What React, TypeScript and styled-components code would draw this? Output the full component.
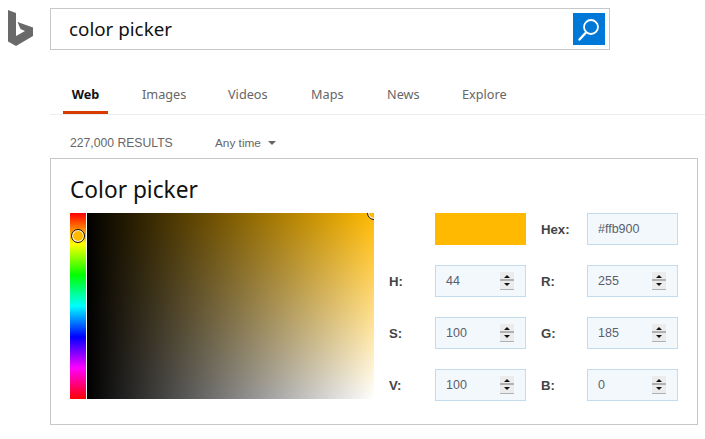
import React from "react";
import styled, { createGlobalStyle } from "styled-components";

const Global = createGlobalStyle`
  html, body { margin: 0; padding: 0; background: #fff; }
  body { font-family: "Open Sans", "Liberation Sans", sans-serif; overflow: hidden; }
`;

const Page = styled.div`
  width: 705px;
  height: 439px;
  display: flex;
  flex-direction: column;
`;

const Header = styled.header`
  display: flex;
  align-items: flex-start;
  padding: 8px 0 0 8px;
  height: 42px;
`;

const LogoMark = styled.svg`
  width: 25px;
  height: 36px;
  margin: 2px 17px 0 0;
  flex: none;
`;

const SearchBox = styled.div`
  box-sizing: border-box;
  width: 560px;
  height: 42px;
  border: 1px solid #c8c8c8;
  display: flex;
  align-items: center;
  justify-content: space-between;
  padding: 0 4px 0 18px;
`;

const Query = styled.span`
  font-family: "Noto Sans", "Open Sans", sans-serif;
  font-size: 18.8px;
  line-height: 26px;
  margin-top: -1px;
  color: #111;
`;

const SearchButton = styled.div`
  width: 32px;
  height: 32px;
  background: #0078d7;
  display: flex;
  align-items: center;
  justify-content: center;
`;

const Tabs = styled.nav`
  margin: 23px 0 0 50px;
  width: 642px;
  height: 41px;
  box-sizing: content-box;
  padding-left: 13px;
  border-bottom: 1px solid #ececec;
  display: grid;
  grid-template-columns: 79px 86px 83px 76px 75px auto;
`;

const Tab = styled.div<{ $active?: boolean }>`
  box-sizing: border-box;
  width: ${(p) => (p.$active ? "45px" : "auto")};
  height: 41px;
  padding-top: 12px;
  text-align: ${(p) => (p.$active ? "center" : "left")};
  font-family: "Noto Sans", "Open Sans", sans-serif;
  font-size: 12.7px;
  line-height: 18px;
  font-weight: ${(p) => (p.$active ? 700 : 400)};
  color: ${(p) => (p.$active ? "#111" : "#666")};
  border-bottom: ${(p) => (p.$active ? "3px solid #d83b01" : "none")};
`;

const Meta = styled.div`
  margin: 20px 0 0 70px;
  height: 16px;
  display: flex;
  align-items: center;
  font-family: "Liberation Sans", Arial, sans-serif;
  font-size: 12.2px;
  color: #666;
`;

const Count = styled.span`
  width: 145px;
`;

const Filter = styled.span`
  display: flex;
  align-items: center;
  gap: 7px;
  font-size: 11.8px;
`;

const Caret = styled.span`
  width: 0;
  height: 0;
  border-left: 4px solid transparent;
  border-right: 4px solid transparent;
  border-top: 4px solid #666;
`;

const Card = styled.section`
  box-sizing: border-box;
  margin: 7px 0 0 50px;
  width: 648px;
  height: 267px;
  border: 1px solid #c8c8c8;
  padding: 15px 19px 0;
`;

const Title = styled.h2`
  margin: 0;
  height: 39px;
  font-family: "Noto Sans", "Open Sans", sans-serif;
  font-weight: 400;
  font-size: 22.7px;
  line-height: 32px;
  color: #111;
`;

const PickerRow = styled.div`
  display: flex;
`;

const HueBar = styled.div`
  position: relative;
  width: 16px;
  height: 186px;
  margin-right: 1px;
  background: linear-gradient(to bottom, #f00 0%, #ff0 16.67%, #0f0 33.33%, #0ff 50%, #00f 66.67%, #f0f 83.33%, #f00 100%);
`;

const SvArea = styled.div`
  position: relative;
  width: 287px;
  height: 186px;
  overflow: hidden;
  background-image: linear-gradient(to right, #000, rgba(0, 0, 0, 0)), linear-gradient(to top, #fff, #ffb900);
`;

const Thumb = styled.span<{ $hue?: boolean }>`
  position: absolute;
  box-sizing: border-box;
  width: 14px;
  height: 14px;
  border-radius: 50%;
  border: 1px solid #111;
  box-shadow: inset 0 0 0 1px #fff;
  background: #ffb900;
  ${(p) => (p.$hue ? "left: 1px; top: 16px;" : "right: -7px; top: -7px;")}
`;

const Fields = styled.div`
  margin-left: 15px;
  display: grid;
  grid-template-columns: 46px 91px 61px 91px;
  grid-auto-rows: 32px;
  row-gap: 20px;
  align-items: center;
`;

const Label = styled.span<{ $second?: boolean }>`
  font-family: "Liberation Sans", Arial, sans-serif;
  font-size: 13.2px;
  font-weight: 700;
  color: #444;
  padding-left: ${(p) => (p.$second ? "15px" : "0")};
`;

const Swatch = styled.div`
  grid-column: 2;
  height: 32px;
  background: #ffb900;
`;

const Input = styled.div`
  box-sizing: border-box;
  height: 32px;
  background: #f3f8fc;
  border: 1px solid #c3dcec;
  display: flex;
  align-items: center;
  justify-content: space-between;
  padding: 0 11px 0 10px;
  font-family: "Liberation Sans", Arial, sans-serif;
  font-size: 12.5px;
  color: #5a5f6e;
`;

const Stepper = styled.div`
  width: 14px;
  height: 17px;
  display: flex;
  flex-direction: column;
  justify-content: space-between;
  background: #ececec;
  border-bottom: 1px solid #b0b0b0;
  position: relative;
  &::before {
    content: "";
    position: absolute;
    left: 0;
    right: 0;
    top: 7px;
    height: 2px;
    background: #b0b0b0;
  }
`;

const Arrow = styled.span<{ $down?: boolean }>`
  display: block;
  width: 0;
  height: 0;
  margin: ${(p) => (p.$down ? "0 auto 3px" : "3px auto 0")};
  border-left: 3px solid transparent;
  border-right: 3px solid transparent;
  ${(p) => (p.$down ? "border-top: 3px solid #111;" : "border-bottom: 3px solid #111;")}
`;

const Spin = () => (
  <Stepper>
    <Arrow />
    <Arrow $down />
  </Stepper>
);

const NumberField = ({ value }: { value: string }) => (
  <Input>
    <span>{value}</span>
    <Spin />
  </Input>
);

const rows = [
  ["H:", "44", "R:", "255"],
  ["S:", "100", "G:", "185"],
  ["V:", "100", "B:", "0"],
];

const tabs = ["Images", "Videos", "Maps", "News", "Explore"];

export default function App() {
  return (
    <Page>
      <Global />
      <Header>
        <LogoMark viewBox="0 0 25 36">
          <path d="M0 0 L8 3 V26 L17 21 L12.5 19 L9.5 12 L25 17.5 V26 L8 36 L0 31.5 Z" fill="#696969" />
        </LogoMark>
        <SearchBox>
          <Query>color picker</Query>
          <SearchButton>
            <svg width="32" height="32" viewBox="0 0 32 32">
              <circle cx="18" cy="14" r="7" fill="none" stroke="#fff" strokeWidth="1.8" />
              <path d="M13 19.5 L6.5 26.5" stroke="#fff" strokeWidth="2.4" strokeLinecap="round" />
            </svg>
          </SearchButton>
        </SearchBox>
      </Header>
      <Tabs>
        <Tab $active>Web</Tab>
        {tabs.map((t) => (
          <Tab key={t}>{t}</Tab>
        ))}
      </Tabs>
      <Meta>
        <Count>227,000 RESULTS</Count>
        <Filter>
          Any time
          <Caret />
        </Filter>
      </Meta>
      <Card>
        <Title>Color picker</Title>
        <PickerRow>
          <HueBar>
            <Thumb $hue />
          </HueBar>
          <SvArea>
            <Thumb />
          </SvArea>
          <Fields>
            <Swatch />
            <Label $second>Hex:</Label>
            <Input>#ffb900</Input>
            {rows.map((r) => (
              <React.Fragment key={r[0]}>
                <Label>{r[0]}</Label>
                <NumberField value={r[1]} />
                <Label $second>{r[2]}</Label>
                <NumberField value={r[3]} />
              </React.Fragment>
            ))}
          </Fields>
        </PickerRow>
      </Card>
    </Page>
  );
}
